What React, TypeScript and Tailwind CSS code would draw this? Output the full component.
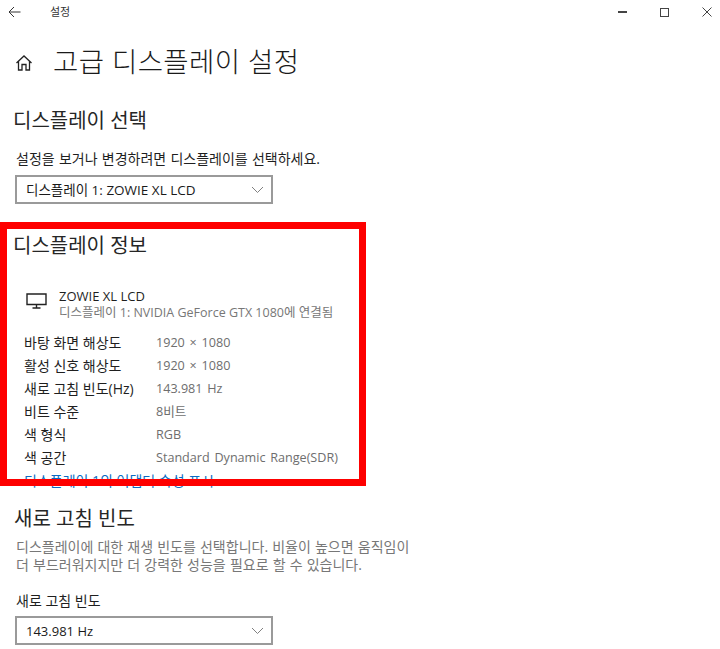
import React from "react";

const font = { fontFamily: '"Open Sans","Noto Sans CJK KR",sans-serif' };

function Select({ label, size }: { label: string; size: string }) {
  return (
    <div className={`flex h-[29px] w-[258px] items-center justify-between border-2 border-[#9a9a9a] pl-[9px] pr-[7px] text-[#1a1a1a] ${size}`}>
      <span className="translate-y-px">{label}</span>
      <svg width="13" height="8" viewBox="0 0 13 8" fill="none" stroke="#808080" strokeWidth="1">
        <path d="M1 1 L6.5 6.5 L12 1" />
      </svg>
    </div>
  );
}

function Row({ k, v }: { k: string; v: string }) {
  return (
    <div className="flex h-[23px] items-center">
      <span className="w-[132px] text-[14px] text-[#1f1f1f]">{k}</span>
      <span className="translate-y-px text-[12.6px] text-[#6e6e6e] [word-spacing:1.5px]">{v}</span>
    </div>
  );
}

export default function App() {
  return (
    <div className="relative h-[649px] w-[720px] overflow-hidden bg-white" style={font}>
      <div className="flex h-[24px] items-center justify-between pl-[8px] pr-[8px]">
        <div className="flex items-center">
          <svg width="13" height="12" viewBox="0 0 13 12" fill="none" stroke="#333" strokeWidth="1">
            <path d="M12.5 6 H1 M6 1 L1 6 L6 11" />
          </svg>
          <span className="ml-[29px] text-[11px] text-[#333]">설정</span>
        </div>
        <div className="flex items-center gap-[33px]">
          <div className="h-[1.5px] w-[9px] bg-[#444]" />
          <div className="h-[9px] w-[9px] border border-[#444]" />
          <svg width="10" height="10" viewBox="0 0 10 10" stroke="#444" strokeWidth="1">
            <path d="M0.5 0.5 L9.5 9.5 M9.5 0.5 L0.5 9.5" />
          </svg>
        </div>
      </div>

      <div className="mt-[18px] flex h-[40px] items-center pl-[15px]">
        <svg className="translate-y-px" width="18" height="18" viewBox="0 0 18 18" fill="none" stroke="#222" strokeWidth="1.3">
          <path d="M1.5 9 L9 2 L16.5 9 M3.5 7.5 V16 H7 V10.5 H11 V16 H14.5 V7.5" />
        </svg>
        <h1 className="ml-[20px] text-[27.5px] font-light tracking-[0.4px] text-[#1a1a1a]">고급 디스플레이 설정</h1>
      </div>

      <div className="px-[14px]">
        <h2 className="mt-[23px] h-[32px] -translate-x-px text-[20px] leading-[32px] text-[#262626]">디스플레이 선택</h2>
        <p className="ml-[2px] mt-[12px] h-[20px] text-[14px] leading-[20px] text-[#1f1f1f] [word-spacing:0.6px]">
          설정을 보거나 변경하려면 디스플레이를 선택하세요.
        </p>
        <div className="ml-[1px] mt-[6px]">
          <Select label="디스플레이 1: ZOWIE XL LCD" size="text-[13.5px]" />
        </div>

        <h2 className="-ml-[1px] mt-[26px] h-[32px] text-[20px] leading-[32px] text-[#262626]">디스플레이 정보</h2>

        <div className="ml-[12px] mt-[26px] flex items-start">
          <svg className="mt-[5px]" width="21" height="16" viewBox="0 0 21 16" fill="none" stroke="#222" strokeWidth="1.4">
            <path d="M1 1 H20 V11.5 H1 Z M6.5 15 H14.5 M10.5 11.5 V15" />
          </svg>
          <div className="ml-[12px]">
            <div className="h-[16px] text-[13px] leading-[16px] text-[#1f1f1f]">ZOWIE XL LCD</div>
            <div className="h-[17px] text-[12.5px] leading-[17px] text-[#777]">디스플레이 1: NVIDIA GeForce GTX 1080에 연결됨</div>
          </div>
        </div>

        <div className="ml-[10px] mt-[10px]">
          <Row k="바탕 화면 해상도" v="1920 × 1080" />
          <Row k="활성 신호 해상도" v="1920 × 1080" />
          <Row k="새로 고침 빈도(Hz)" v="143.981 Hz" />
          <Row k="비트 수준" v="8비트" />
          <Row k="색 형식" v="RGB" />
          <Row k="색 공간" v="Standard Dynamic Range(SDR)" />
          <div className="mt-[3px] h-[18px] text-[14px] leading-[18px] text-[#0a6cc4]">디스플레이 1의 어댑터 속성 표시</div>
        </div>

        <h2 className="mt-[13px] h-[32px] text-[20px] leading-[32px] text-[#262626]">새로 고침 빈도</h2>
        <p className="ml-[2px] mt-[3px] text-[14px] leading-[18px] text-[#777] [word-spacing:0.5px]">
          디스플레이에 대한 재생 빈도를 선택합니다. 비율이 높으면 움직임이
          <br />더 부드러워지지만 더 강력한 성능을 필요로 할 수 있습니다.
        </p>
        <p className="ml-[2px] mt-[17px] h-[20px] text-[14px] leading-[20px] text-[#1f1f1f]">새로 고침 빈도</p>
        <div className="ml-[1px] mt-[5px]">
          <Select label="143.981 Hz" size="text-[13px]" />
        </div>
      </div>

      <div className="absolute left-0 top-[222px] h-[264px] w-[366px] border-[7px] border-[#fe0000]" />
    </div>
  );
}
